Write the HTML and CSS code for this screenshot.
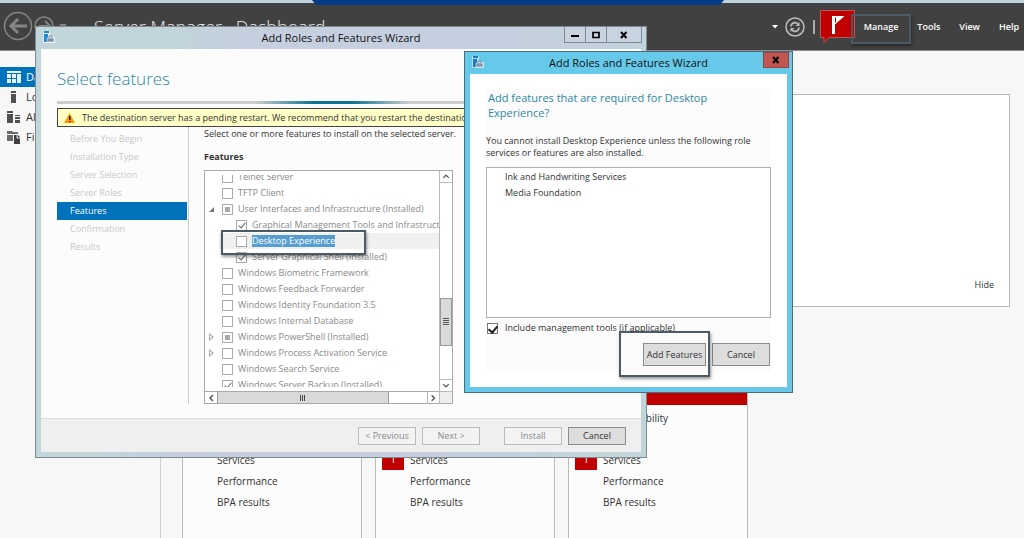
FILE: index.html
```html
<!DOCTYPE html>
<html lang="en">
<head>
<meta charset="utf-8">
<title>Server Manager</title>
<link rel="stylesheet" href="styles.css">
</head>
<body>
<div class="desktop">
  <div class="strip"><div class="remote-bar"></div></div>
  <header class="topbar">
    <svg class="nav-arrows" width="76" height="34" viewBox="0 0 76 34" fill="none" stroke="#858585">
      <circle cx="18" cy="16" r="13.5" stroke-width="1.500"/>
      <path d="M27 16H11M18 9l-7 7 7 7" stroke-width="3"/>
      <circle cx="44" cy="16" r="9" stroke-width="1.500"/>
      <path d="M39 16h10M45 11l5 5-5 5" stroke-width="2"/>
      <path d="M59 14h8l-4 4z" fill="#858585" stroke="none"/>
    </svg>
    <h1 class="app-title">Server Manager · Dashboard</h1>
    <div class="tools">
      <svg width="6" height="4" viewBox="0 0 6 4"><path d="M0 0h6L3 3.5z" fill="#fff"/></svg>
      <svg class="refresh" width="20" height="20" viewBox="0 0 20 20" fill="none" stroke="#bdbdbd">
        <circle cx="10" cy="10" r="9" stroke-width="1.5"/>
        <path d="M6 9.500a4 4 0 0 1 7-2.500M14 10.500a4 4 0 0 1-7 2.500" stroke-width="1.700"/>
        <path d="M14.500 5v4h-4zM5.500 15v-4h4z" fill="#bdbdbd" stroke="none"/>
      </svg>
      <span class="bar"></span>
      <svg class="flag" width="36" height="34" viewBox="0 0 36 34">
        <path d="M.500.500h34v27H9L4 32.500v-5H.500z" fill="#c00000" stroke="#b85a5a"/>
        <path d="M12 6h12.500L15 14.500V24h-3z" fill="#fff"/><path d="M15.500 7.500v5" stroke="#c00000"/>
      </svg>
      <nav class="menu">
        <a class="marked" href="#">Manage<span class="mark mark-menu"></span></a>
        <a href="#">Tools</a>
        <a href="#">View</a>
        <a href="#">Help</a>
      </nav>
    </div>
  </header>
  <div class="body">
    <aside class="side">
      <a class="side-item current" href="#"><svg width="14" height="12" viewBox="0 0 14 12"><path d="M0 0h14v2H0zM0 3h4v4H0zM5 3h4v4H5zM10 3h4v9h-4zM0 8h4v4H0zM5 8h4v4H5z" fill="#e4f1fa"/></svg>Dashboard</a>
      <a class="side-item" href="#"><svg width="14" height="13" viewBox="0 0 14 13"><path d="M4 0h5v2H4zM4 3h5v9H4z" fill="#505050"/></svg>Local Server</a>
      <a class="side-item" href="#"><svg width="14" height="13" viewBox="0 0 14 13"><path d="M0 0h6v2H0zM0 3h6v9H0zM8 4h5v1H8zM8 6h5v2H8zM8 9h5v3H8z" fill="#505050"/></svg>All Servers</a>
      <a class="side-item" href="#"><svg width="14" height="13" viewBox="0 0 14 13"><path d="M0 0h5l1 1h5v2H0zM0 4h6v6H0z" fill="#6b6b6b"/><path d="M7 4h4l2 2v7H7z" fill="#404040"/><path d="M10 4v3h3" stroke="#eee" fill="none"/></svg>File and Storage Services</a>
    </aside>
    <main class="main">
      <section class="welcome"><a href="#">Hide</a></section>
      <section class="tiles">
        <article class="tile">
          <div class="tile-head ok"></div>
          <ul><li><i></i>Manageability</li><li></li><li><i></i>Services</li><li><i></i>Performance</li><li><i></i>BPA results</li></ul>
        </article>
        <article class="tile">
          <div class="tile-head"></div>
          <ul><li><i></i>Manageability</li><li></li><li><i class="count">1</i>Services</li><li><i></i>Performance</li><li><i></i>BPA results</li></ul>
        </article>
        <article class="tile">
          <div class="tile-head"></div>
          <ul><li><i></i>Manageability</li><li></li><li><i class="count">1</i>Services</li><li><i></i>Performance</li><li><i></i>BPA results</li></ul>
        </article>
      </section>
    </main>
  </div>

  <section class="window wizard">
    <div class="titlebar">
      <svg class="win-icon" width="12" height="12" viewBox="0 0 12 12"><path d="M0 0h7v6h5v6H0z" fill="#e6f0f6"/><path d="M1 0h5v2H1zM1 3h4v8H1z" fill="#1e88d2"/><path d="M4 7h7v4H4z" fill="#7f95ad" stroke="#fff" stroke-width=".5"/><path d="M6 7V5h3v2" fill="none" stroke="#7890a8"/></svg>
      <h2>Add Roles and Features Wizard</h2>
      <div class="win-buttons">
        <button aria-label="Minimize"><svg width="10" height="8"><path d="M1 4h8v2H1z"/></svg></button>
        <button aria-label="Maximize"><svg width="10" height="8"><path d="M2 1.500h6v5H2z" fill="none" stroke="#000" stroke-width="1.700"/></svg></button>
        <button class="wide" aria-label="Close"><svg width="10" height="8"><path d="M2 1l5.500 6M7.500 1L2 7" stroke="#000" stroke-width="2"/></svg></button>
      </div>
    </div>
    <div class="client">
      <h3 class="page-title">Select features</h3>
      <div class="rule"></div>
      <div class="warning">
        <svg width="11" height="10" viewBox="0 0 11 10"><path d="M5.500 0L11 10H0z" fill="#f90"/><path d="M5 3h1.500v4H5zM5 8h1.500v1.200H5z" fill="#222"/></svg>
        <span>The destination server has a pending restart. We recommend that you restart the destination server</span>
      </div>
      <div class="columns">
        <nav class="steps">
          <span>Before You Begin</span><span>Installation Type</span><span>Server Selection</span><span>Server Roles</span><span class="active">Features</span><span>Confirmation</span><span>Results</span>
        </nav>
        <div class="pane">
          <p>Select one or more features to install on the selected server.</p>
          <h4>Features</h4>
          <div class="tree">
            <div class="tree-rows">
              <label><input type="checkbox">Telnet Server</label>
              <label><input type="checkbox">TFTP Client</label>
              <label class="open"><input type="checkbox" class="partial">User Interfaces and Infrastructure (Installed)</label>
              <label class="child"><input type="checkbox" checked>Graphical Management Tools and Infrastructure</label>
              <label class="child hot"><input type="checkbox"><mark>Desktop Experience</mark></label>
              <label class="child"><input type="checkbox" checked>Server Graphical Shell (Installed)</label>
              <label><input type="checkbox">Windows Biometric Framework</label>
              <label><input type="checkbox">Windows Feedback Forwarder</label>
              <label><input type="checkbox">Windows Identity Foundation 3.5</label>
              <label><input type="checkbox">Windows Internal Database</label>
              <label class="closed"><input type="checkbox" class="partial">Windows PowerShell (Installed)</label>
              <label class="closed"><input type="checkbox">Windows Process Activation Service</label>
              <label><input type="checkbox">Windows Search Service</label>
              <label><input type="checkbox" checked>Windows Server Backup (Installed)</label>
            </div>
            <div class="vscroll">
              <svg width="12" height="12" viewBox="0 0 12 12"><path d="M3 7.500l3-3 3 3" fill="none" stroke="#555" stroke-width="1.500"/></svg>
              <div class="vthumb"><svg width="6" height="8"><path d="M0 .5h6M0 2.500h6M0 4.500h6M0 6.500h6" stroke="#555"/></svg></div>
              <svg width="12" height="12" viewBox="0 0 12 12"><path d="M3 4.500l3 3 3-3" fill="none" stroke="#555" stroke-width="1.500"/></svg>
            </div>
            <div class="hscroll">
              <svg width="12" height="12" viewBox="0 0 12 12"><path d="M8 3L5 6l3 3" fill="none" stroke="#555" stroke-width="1.500"/></svg>
              <div class="hthumb"><svg width="8" height="6"><path d="M1.500 0v6M3.500 0v6M5.500 0v6" stroke="#444"/></svg></div>
              <svg width="12" height="12" viewBox="0 0 12 12"><path d="M4 3l3 3-3 3" fill="none" stroke="#555" stroke-width="1.500"/></svg>
            </div>
            <div class="corner"></div>
            <span class="mark mark-row"></span>
          </div>
        </div>
      </div>
      <footer class="actions">
        <button class="btn" disabled>&lt; Previous</button>
        <button class="btn" disabled>Next &gt;</button>
        <button class="btn apart" disabled>Install</button>
        <button class="btn">Cancel</button>
      </footer>
    </div>
  </section>

  <section class="window dialog" role="dialog" aria-labelledby="dlg-title">
    <div class="titlebar">
      <svg class="win-icon" width="12" height="12" viewBox="0 0 12 12"><path d="M0 0h7v6h5v6H0z" fill="#b8e0f2"/><path d="M1 0h5v2H1zM1 3h4v8H1z" fill="#1e78c2"/><path d="M4 7h7v4H4z" fill="#7f95ad" stroke="#fff" stroke-width=".5"/><path d="M6 7V5h3v2" fill="none" stroke="#7890a8"/></svg>
      <h2 id="dlg-title">Add Roles and Features Wizard</h2>
      <button class="close" aria-label="Close"><svg width="10" height="8"><path d="M2 1l5.500 6M7.500 1L2 7" stroke="#000" stroke-width="2"/></svg></button>
    </div>
    <div class="client">
      <div class="sheet">
        <h3>Add features that are required for Desktop Experience?</h3>
        <p>You cannot install Desktop Experience unless the following role services or features are also installed.</p>
        <ul class="list"><li>Ink and Handwriting Services</li><li>Media Foundation</li></ul>
        <label class="include"><input type="checkbox" checked>Include management tools (if applicable)</label>
        <div class="dialog-actions">
          <button class="btn tall marked">Add Features<span class="mark mark-button"></span></button>
          <button class="btn tall">Cancel</button>
        </div>
      </div>
    </div>
  </section>
</div>
</body>
</html>
```
FILE: styles.css
```css
* { box-sizing: border-box; }
body, h1, h2, h3, h4, p, ul { margin: 0; padding: 0; }
body { font: 9px/16px "Open Sans", "Noto Sans", sans-serif; color: #333; }
ul { list-style: none; }
a { color: inherit; text-decoration: none; }
button { font: inherit; color: inherit; padding: 0; }
svg { flex: none; display: block; }

.desktop { position: relative; display: flex; flex-direction: column; height: 100vh; overflow: hidden; background: #f7f7f7; }
.strip { height: 3px; background: #bdd2dc; position: relative; flex: none; }
.remote-bar { position: absolute; z-index: 1; left: 312px; top: 0; width: 412px; height: 5px; background: #053c88; clip-path: polygon(0 0, 100% 0, 99% 100%, 1% 100%); }
.topbar { flex: none; height: 48px; padding: 0 5px 0 0; background: #414141; display: flex; align-items: center; border-bottom: 1px solid #8a8a8a; }
.app-title { margin-left: 18px; font-size: 18px; line-height: 26px; font-weight: 300; color: #eee; }
.tools { margin-left: auto; display: flex; align-items: center; }
.refresh { margin-left: 7px; }
.bar { width: 2px; height: 14px; margin: 0 5px 0 8px; background: #aaa; }
.menu { display: flex; gap: 19px; margin-left: 8px; color: #fff; font-weight: 600; }
.marked { position: relative; }
.mark { position: absolute; border: 2px solid #4a5a66; box-shadow: 1px 2px 3px #0006; pointer-events: none; }
.mark-menu { left: -13px; right: -13px; top: -5px; height: 30px; }

.body { flex: 1; display: flex; min-height: 0; }
.side { width: 161px; flex: none; padding-top: 16px; border-right: 1px solid #d0d0d0; font-size: 11px; }
.side-item { display: flex; align-items: center; gap: 5px; height: 20px; padding-left: 7px; white-space: nowrap; overflow: hidden; }
.current { background: #0072bc; color: #fff; }
.main { flex: 1; padding: 43px 14px 0 21px; }
.welcome { height: 213px; border: 1px solid #b8b8b8; background: #fff; display: flex; justify-content: flex-end; align-items: flex-end; padding: 0 15px 13px; font-size: 9px; }
.tiles { display: flex; gap: 13px; margin-top: 62px; }
.tile { width: 180px; border: 1px solid #bbb; background: #fcfcfc; font-size: 10px; height: 200px; }
.tile-head { height: 35px; background: #c00000; }
.ok { background: #5a8a3c; }
.tile ul { padding: 2px 6px; }
.tile li { display: flex; align-items: center; height: 21px; }
.tile i { width: 22px; height: 21px; margin-right: 6px; font-style: normal; text-align: center; }
.tile .count { background: #c00000; color: #fff; line-height: 21px; }

.window { position: absolute; display: flex; flex-direction: column; }
.wizard { left: 35px; top: 26px; width: 612px; padding: 0 5px 5px; border: 1px solid #7f8b90; background: linear-gradient(100deg, #c1d5da 20%, #c5cfdf 30%, #c5cfdf 70%, #c1d5da 95%); }
.titlebar { position: relative; display: flex; align-items: center; height: 22px; }
.titlebar h2 { flex: 1; text-align: center; font-size: 11px; font-weight: 400; line-height: 20px; color: #111; }
.win-icon { position: absolute; left: 2px; top: 4px; }
.win-buttons { position: absolute; right: -1px; top: -1px; display: flex; }
.win-buttons button { width: 22px; height: 17px; margin-left: -1px; border: 1px solid #7c8796; background: #c9d3e0; display: grid; place-items: center; }
.win-buttons .wide { width: 36px; }
.client { background: #fcfcfc; }
.wizard .client { display: flex; flex-direction: column; padding-top: 17px; }
.page-title { margin-left: 16px; font-size: 17px; line-height: 26px; font-weight: 300; color: #2f87a4; }
.rule { height: 3px; margin: 9px 16px 4px; background: linear-gradient(90deg, #ccc 35%, #0b7594 45%, #0b7594 52%, #ccc 62%); }
.warning { display: flex; align-items: center; gap: 7px; height: 19px; margin: 0 16px; padding-left: 6px; border: 1px solid #444; background: #ffffc6; white-space: nowrap; overflow: hidden; }
.columns { display: flex; padding-left: 16px; }
.steps { display: flex; flex-direction: column; width: 132px; height: 277px; padding-top: 3px; border-right: 1px solid #ccc; color: #c9c9c9; line-height: 18px; }
.steps span { padding-left: 13px; margin-right: 1px; }
.steps .active { background: #0072bc; color: #fff; }
.pane { width: 264px; padding-left: 15px; }
.pane p { margin-top: -1px; white-space: nowrap; }
.pane h4 { margin: 7px 0 5px; }
.tree { position: relative; display: grid; grid-template: 220px 12px / 1fr 13px; border: 1px solid #aaa; background: #fff; }
.tree-rows { overflow: hidden; margin: 4px 0; height: 212px; color: #8a8a8a; }
.tree-rows label { position: relative; display: flex; align-items: center; gap: 5px; height: 16px; padding-left: 17px; white-space: nowrap; }
.tree-rows label:first-child { margin-top: -6px; }
.tree-rows .child { padding-left: 31px; }
.tree-rows .hot { background: linear-gradient(90deg, transparent 14px, #f0f0f0 14px); }
mark { background: #569ed0; color: #fff; line-height: 12px; }
.open::before, .closed::before { content: ""; position: absolute; left: 4px; top: 6px; width: 5px; height: 5px; background: #777; clip-path: polygon(100% 0, 100% 100%, 0 100%); }
.closed::before { top: 4px; height: 8px; background: #aaa; clip-path: polygon(0 0, 100% 50%, 0 100%, 0 0, 1px 2px, 1px 6px, 3px 4px, 1px 2px); }
input { appearance: none; position: relative; flex: none; width: 11px; height: 11px; margin: 0; border: 1px solid #aaa; background: #fff; }
input:checked::before { content: ""; position: absolute; left: 3px; top: 0; width: 3px; height: 6px; border: solid #666; border-width: 0 1px 1px 0; transform: rotate(40deg); }
.partial::before { content: ""; position: absolute; inset: 2px; background: #aaa; }
.vscroll { display: flex; flex-direction: column; justify-content: space-between; border: solid #bbb; border-width: 0 0 0 1px; }
.vscroll > svg:first-child { border-bottom: 1px solid #bbb; }
.vscroll > svg:last-child { border-top: 1px solid #bbb; }
.vthumb { height: 48px; margin-top: 82px; border: 1px solid #999; background: #dadada; display: grid; place-items: center; }
.hscroll { display: flex; border-top: 1px solid #aaa; }
.hscroll > svg:last-child { margin-left: auto; border-left: 1px solid #bbb; }
.hthumb { width: 172px; border: solid #999; border-width: 0 1px; background: #dadada; display: grid; place-items: center; }
.corner { border: solid #bbb; border-width: 1px 0 0 1px; background: #eee; }
.mark-row { left: 16px; top: 59px; width: 145px; height: 25px; }
.actions { display: flex; justify-content: flex-end; gap: 6px; margin-top: 14px; padding: 8px 15px 7px; border-top: 1px solid #ddd; background: #efefef; }
.btn { width: 58px; height: 18px; border: 1px solid #8c8c8c; background: #ddd; line-height: 16px; }
.btn:disabled { color: #8a8a8a; border-color: #bbb; background: #f3f3f3; }
.apart { margin-left: 18px; }

.dialog { left: 464px; top: 51px; width: 329px; padding: 0 5px 5px; border: 1px solid #4c6c7c; background: #66c9e9; }
.close { position: absolute; right: -2px; top: 0; width: 26px; height: 16px; border: 1px solid #8d4545; background: #c2554f; display: grid; place-items: center; }
.dialog .client { background: #fff; padding: 15px 16px; }
.sheet { background: #fbfbfb; }
.sheet h3 { padding: 1px 40px 0 2px; font-size: 11px; line-height: 15px; font-weight: 400; color: #2f87a4; }
.sheet p { margin: 15px 0 8px; line-height: 12px; }
.list { height: 151px; padding: 1px 18px; border: 1px solid #b0b0b0; background: #fff; }
.include { display: flex; align-items: center; gap: 7px; height: 16px; margin-top: 2px; padding-left: 1px; }
.dialog-actions { display: flex; justify-content: flex-end; gap: 6px; padding: 7px 1px 6px; }
.tall { height: 23px; line-height: 20px; }
.tall.marked { width: 63px; }
.include input { border-color: #777; }
.include input:checked::before { border-color: #222; border-width: 0 2px 2px 0; width: 4px; height: 7px; left: 2px; }
.mark-button { left: -25px; right: -5px; top: -13px; height: 46px; }
```
